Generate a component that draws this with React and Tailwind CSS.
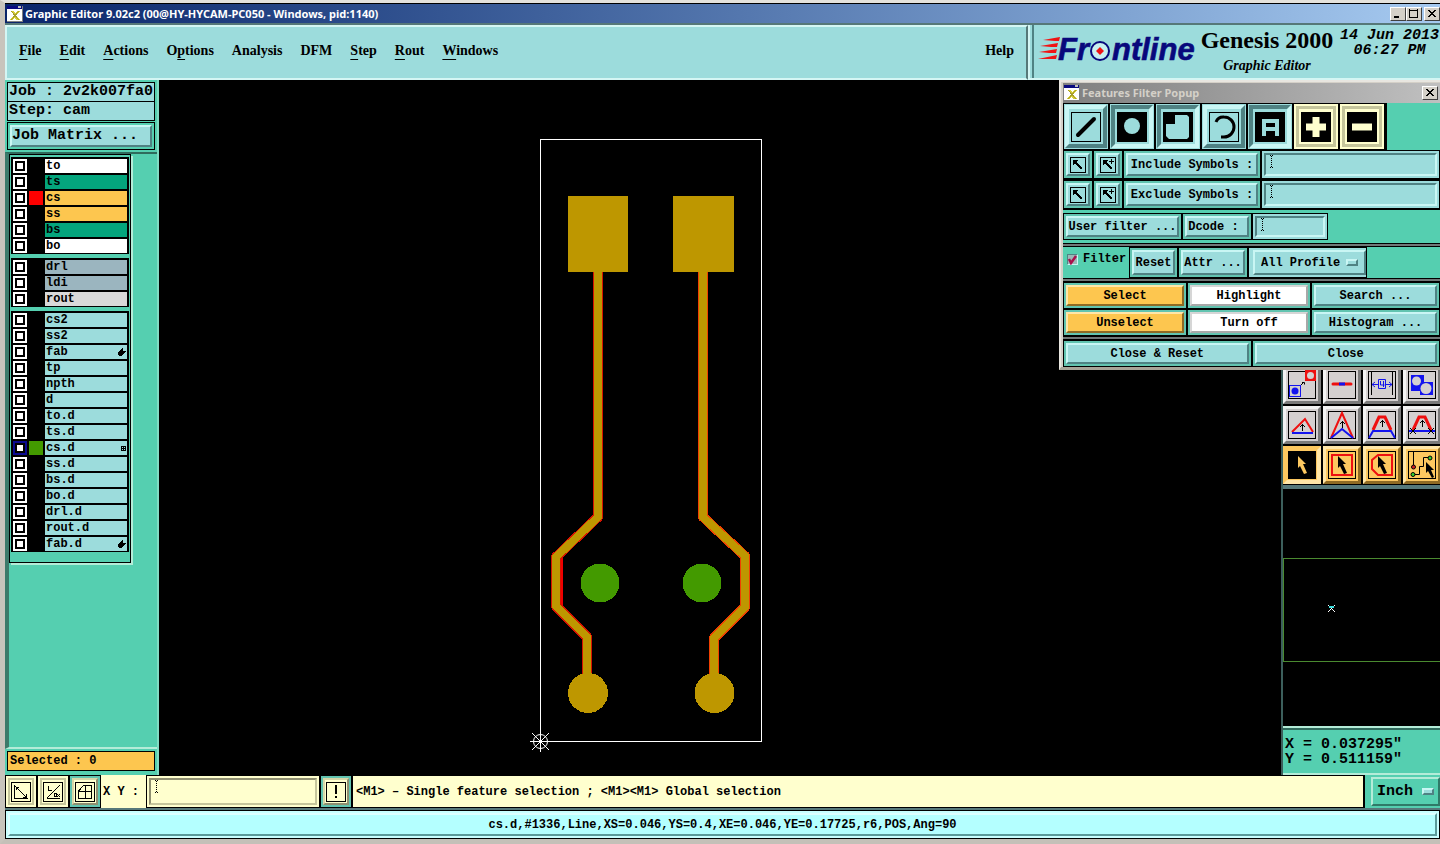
import React, { useState } from 'react';

const MONO = "font-['Liberation_Mono','DejaVu_Sans_Mono',monospace]";
const SERIF = "font-['Liberation_Serif',serif]";
const SANS = "font-['Noto_Sans','Open_Sans',sans-serif]";

// Motif style edges
const RAISED = 'border-2 border-t-[#c9f6f4] border-l-[#c9f6f4] border-b-[#4f8283] border-r-[#4f8283]';
const SUNKEN = 'border-2 border-t-[#4f8283] border-l-[#4f8283] border-b-[#c9f6f4] border-r-[#c9f6f4]';
const RAISED_GOLD = 'border-2 border-t-[#ffe6a8] border-l-[#ffe6a8] border-b-[#8f6a24] border-r-[#8f6a24]';
const RAISED_WHITE = 'border-2 border-t-[#d6d6d6] border-l-[#d6d6d6] border-b-[#a8a8a8] border-r-[#a8a8a8]';

const menus = [
  ['', 'F', 'ile'],
  ['', 'E', 'dit'],
  ['', 'A', 'ctions'],
  ['O', 'p', 'tions'],
  ['Analysis', '', ''],
  ['DFM', '', ''],
  ['', 'S', 'tep'],
  ['', 'R', 'out'],
  ['', 'W', 'indows'],
];

const layerGroups = [
  [
    { name: 'to', bg: 'bg-white' },
    { name: 'ts', bg: 'bg-[#04a57d]' },
    { name: 'cs', bg: 'bg-[#fdc64f]', swatch: 'bg-[#fe0000]' },
    { name: 'ss', bg: 'bg-[#fdc64f]' },
    { name: 'bs', bg: 'bg-[#04a57d]' },
    { name: 'bo', bg: 'bg-white' },
  ],
  [
    { name: 'drl', bg: 'bg-[#9bb5bf]' },
    { name: 'ldi', bg: 'bg-[#9bb5bf]' },
    { name: 'rout', bg: 'bg-[#d9d9d9]' },
  ],
  [
    { name: 'cs2' },
    { name: 'ss2' },
    { name: 'fab', mark: 'hand' },
    { name: 'tp' },
    { name: 'npth' },
    { name: 'd' },
    { name: 'to.d' },
    { name: 'ts.d' },
    { name: 'cs.d', swatch: 'bg-[#439a00]', mark: 'grid' },
    { name: 'ss.d' },
    { name: 'bs.d' },
    { name: 'bo.d' },
    { name: 'drl.d' },
    { name: 'rout.d' },
    { name: 'fab.d', mark: 'hand' },
  ],
];

const AppIcon = () => (
  <svg width="16" height="16" viewBox="0 0 16 16" shapeRendering="crispEdges" className="shrink-0">
    <rect width="16" height="16" fill="#808080" />
    <rect width="15" height="15" fill="#fff" />
    <rect width="15" height="3" fill="#0a0a80" />
    <rect x="11" y="0" width="3" height="2" fill="#c0c0c0" />
    <path d="M3 5h4l1 2 2-2h3l-4 4 4 5H9l-1-3-2 3H3l4-5z" fill="#d8cf3a" />
    <path d="M4 5l8 9M12 5l-8 9" stroke="#a89f28" strokeWidth="1" />
  </svg>
);

const IBeam = () => (
  <svg width="5" height="13" viewBox="0 0 5 13" shapeRendering="crispEdges" className="shrink-0">
    <path d="M2.500 1v12" stroke="#000" strokeDasharray="1 1" />
    <path d="M1 .5h1M3 .5h1M1 12.500h1M3 12.500h1" stroke="#000" />
  </svg>
);

const Dash = () => (
  <span className={`pointer-events-none h-[7px] w-3 shrink-0 bg-[#9cdcdc] ${RAISED}`} />
);

const WinButton = ({ label, children }) => (
  <button
    aria-label={label}
    className="flex h-[14px] w-4 shrink-0 items-center justify-center border border-t-white border-l-white border-b-[#404040] border-r-[#404040] bg-[#d4d0c8]"
  >
    <svg width="10" height="10" viewBox="0 0 10 10" fill="none" stroke="#000" shapeRendering="crispEdges">
      {children}
    </svg>
  </button>
);

const closeGlyph = <path d="M1 1l7 7M2 1l7 7M8 1l-7 7M9 1l-7 7" shapeRendering="auto" />;

function TitleBar() {
  return (
    <header className={`flex h-[19px] items-center gap-0.5 bg-gradient-to-r from-[#0a246a] to-[#a6caf0] pl-0.5 ${SANS}`}>
      <AppIcon />
      <h1 className="flex-1 text-[11px] leading-[18px] font-bold text-white">
        Graphic Editor 9.02c2 (00@HY-HYCAM-PC050 - Windows, pid:1140)
      </h1>
      <div className="flex">
        <WinButton label="Minimize"><path d="M1 8h5" strokeWidth="2" /></WinButton>
        <WinButton label="Maximize"><path d="M.5 1h8M.5 0v8.500M8.500 0v8.500M0 8.500h9" /></WinButton>
      </div>
      <WinButton label="Close">{closeGlyph}</WinButton>
    </header>
  );
}

const Logo = () => (
  <svg width="162" height="40" viewBox="1035 32 162 40" className="shrink-0" role="img" aria-label="Frontline">
    <g fill="#f01414">
      <path d="M1042 42l17-3-1 4-4 0z" />
      <path d="M1039 48l18-3-1 4-6 0z" />
      <path d="M1038 54l18-3-1 4-7 0z" />
      <path d="M1037 61l19-4-1 4-7 0z" />
    </g>
    <g fill="#08087c" stroke="#08087c" strokeWidth=".6" fontFamily="Liberation Sans" fontWeight="700" fontStyle="italic" fontSize="31">
      <text x="1057" y="62">Fr</text>
      <text x="1111" y="62">ntline</text>
    </g>
    <circle cx="1099" cy="53" r="9" fill="#c8f0f0" stroke="#08087c" strokeWidth="2" />
    <path d="M1099 49l4 4-4 4-4-4z" fill="#f01414" />
  </svg>
);

function MenuRow() {
  return (
    <div className={`flex h-[57px] bg-[#567878] pt-0.5 ${SERIF}`}>
      <nav className="flex flex-1 items-center gap-[18px] border-2 border-t-[#d4f6f4] border-l-[#d4f6f4] border-b-[#d4f6f4] border-r-[#567878] bg-[#9cdcdc] pr-3 pb-1 pl-3 text-[14px] leading-4 font-bold">
        {menus.map(([pre, key, post]) => (
          <button key={pre + key + post} className="whitespace-nowrap">
            {pre}
            <span className="underline underline-offset-4">{key}</span>
            {post}
          </button>
        ))}
        <button className="ml-auto">Help</button>
      </nav>
      <div className="flex w-[412px] shrink-0 items-start overflow-hidden border-b-2 border-l-2 border-[#d4f6f4] bg-[#9cdcdc]">
        <div className="ml-0.5 flex h-full items-start border-l-2 border-[#4f8283] pt-[5px] pl-0.5">
          <Logo />
        </div>
        <div className="w-[138px] shrink-0 pt-px text-center">
          <div className="text-[24px] leading-[28px] font-bold whitespace-nowrap">Genesis 2000</div>
          <div className="text-[14px] leading-6 font-bold italic">Graphic Editor</div>
        </div>
        <div className={`ml-1 w-[99px] shrink-0 pt-[3px] text-center text-[15px] leading-[15px] font-bold whitespace-nowrap italic ${MONO}`}>
          14 Jun 2013
          <br />
          06:27 PM
        </div>
      </div>
    </div>
  );
}

const LayerMark = ({ type }) => {
  if (type === 'hand') {
    return (
      <svg width="8" height="8" viewBox="0 0 8 8" shapeRendering="crispEdges">
        <path d="M3 1h1V0h1v3h3v1H7v1H6v1H5v1H4v1H1V7H0V4h1V3h1V2h1z" />
      </svg>
    );
  }
  return (
    <svg width="5" height="5" viewBox="0 0 5 5" shapeRendering="crispEdges">
      <path d="M0 0h5v5H0zM1 1v1h1V1zM3 1v1h1V1zM1 3v1h1V3zM3 3v1h1V3z" fillRule="evenodd" />
    </svg>
  );
};

function LayerList({ checked, onToggle }) {
  return (
    <div className="flex w-[122px] flex-col gap-1 border border-black bg-[#55cfb0] px-px pt-0.5 pb-2.5 shadow-[2px_2px_0_#b4ecd8]">
      {layerGroups.map((group, i) => (
        <div key={i} className="bg-black px-0.5 pt-px">
          {group.map((layer) => (
            <label key={layer.name} className="flex h-4 gap-0.5 pb-0.5 pt-px">
              <input
                type="checkbox"
                checked={checked.includes(layer.name)}
                onChange={() => onToggle(layer.name)}
                className="h-3.5 w-3.5 appearance-none border-2 border-white bg-white shadow-[inset_0_0_0_2px_#000] checked:border-[#0a0a90]"
              />
              <span className={`h-3.5 w-3.5 ${layer.swatch || 'bg-black'}`} />
              <span className={`flex h-3.5 flex-1 items-center justify-between px-px text-[12px] leading-[14px] font-bold ${layer.bg || 'bg-[#9cdcdc]'}`}>
                {layer.name}
                {layer.mark && <LayerMark type={layer.mark} />}
              </span>
            </label>
          ))}
        </div>
      ))}
    </div>
  );
}

function LeftPanel() {
  const [checked, setChecked] = useState(['cs.d']);

  const toggle = (name) => {
    setChecked(checked.includes(name) ? checked.filter((n) => n !== name) : [...checked, name]);
  };

  return (
    <aside className={`flex w-[154px] shrink-0 flex-col border-r-2 border-[#7fdcc4] bg-[#55cfb0] ${MONO}`}>
      <div className="flex flex-col px-0.5 pt-0.5 text-[15px] leading-[18px] font-bold whitespace-nowrap">
        <div className="border border-black bg-[#9cdcdc] px-px">Job : 2v2k007fa0</div>
        <div className="-mt-px border border-black bg-[#9cdcdc] px-px">Step: cam</div>
        <div className="mt-px border border-black p-0.5">
          <button className={`w-full bg-[#9cdcdc] text-left leading-[18px] ${RAISED}`}>Job Matrix ...</button>
        </div>
      </div>
      <div className="mt-0.5 flex flex-1 flex-col border-t-2 border-b-2 border-l-4 border-t-[#2f6b5c] border-b-[#b4ecd8] border-l-[#3c7a6a]">
        <LayerList checked={checked} onToggle={toggle} />
      </div>
      <div className="px-0.5 pt-0.5 pb-1">
        <div className="border border-black bg-[#fdc64f] px-0.5 text-[12px] leading-[18px] font-bold">Selected : 0</div>
      </div>
    </aside>
  );
}

const leftTrack = 'M598 271V517L556 557V606L587 637V680';
const rightTrack = 'M703 271V517L745 556V607L714 638V680';

const Board = () => (
  <svg viewBox="159 80 1122 695" className="h-full w-full" fill="none" shapeRendering="crispEdges">
    <rect x="540.500" y="139.500" width="221" height="602" stroke="#fff" />
    <path d="M561 556V608M742 556V608" stroke="#f00000" strokeWidth="4" />
    <path d={leftTrack} stroke="#d81400" strokeWidth="10" strokeLinejoin="round" />
    <path d={rightTrack} stroke="#f04000" strokeWidth="10" strokeLinejoin="round" />
    <path d="M552.500 558v48" stroke="#439a00" />
    <path d={leftTrack} stroke="#be9700" strokeWidth="8" strokeLinejoin="round" />
    <path d={rightTrack} stroke="#be9700" strokeWidth="8" strokeLinejoin="round" />
    <g fill="#be9700">
      <rect x="568" y="196" width="60" height="76" />
      <rect x="673" y="196" width="61" height="76" />
      <circle cx="588" cy="693" r="20" />
      <circle cx="714.500" cy="693" r="20" />
    </g>
    <g fill="#439a00">
      <circle cx="600" cy="583" r="19.500" />
      <circle cx="702" cy="583" r="19.500" />
    </g>
    <g stroke="#fff" shapeRendering="auto">
      <circle cx="540.500" cy="741.500" r="7" />
      <path d="M530 741.500h21M540.500 731v21M532 733l17 17M549 733l-17 17" />
    </g>
  </svg>
);

const red = { stroke: '#ee1010', strokeWidth: 2 };
const blue = { stroke: '#1414ee', strokeWidth: 2 };
const Up = ({ y = 10 }) => <path d={`M14.500 ${y}v7M12 ${y + 3}l2.500-2.500 2.500 2.500`} stroke="#000" />;
const arrowShape = 'M10 5l8 8h-3l4 9-3 1-4-8-2 2z';

const tools = [
  { label: 'Move', icon: <><rect x="17" y="-1" width="11" height="11" fill="#ee1010" /><circle cx="22.500" cy="4.500" r="3.500" fill="#d4d0d0" /><rect x="1.500" y="14.500" width="11" height="11" stroke="#1414ee" /><circle cx="7" cy="20" r="3.500" fill="#1414ee" /><path d="M13 14l3-3M14 11.500h2.500v2" stroke="#000" /></> },
  { label: 'Line', icon: <><path d="M5 13h18" stroke="#ee1010" strokeWidth="3" strokeLinecap="round" /><path d="M11 13h6" stroke="#1414ee" strokeWidth="3" /></> },
  { label: 'Space', icon: <><path d="M3.500 1v23M24.500 1v23" stroke="#000" /><path d="M4 13.500h6M18 13.500h6M7 11l-3 2.500 3 2.500M21 11l3 2.500-3 2.500M10.500 8.500h7v9h-7zM12.500 10v4h4M15.500 10v6" stroke="#1414ee" /></> },
  { label: 'Copy shape', icon: <><path d="M3 4h13v7h9v13H12v-4H3z" fill="#1414ee" /><circle cx="8.500" cy="10" r="4.500" fill="#d4d0d0" /><circle cx="18" cy="17.500" r="5.500" fill="#d4d0d0" /></> },
  { label: 'Angle 1', icon: <><path d="M4 21L17 8l8 13" {...red} /><path d="M4 22h21" {...blue} /><Up y={13} /></> },
  { label: 'Angle 2', icon: <><path d="M3 27L14 2l11 25" {...red} /><path d="M3 27l11-9 11 9" {...blue} /><Up y={10} /></> },
  { label: 'Angle 3', icon: <><path d="M5 19L11 6h6l6 13" {...red} strokeWidth={3} /><path d="M1 27l4-7h18l4 7" {...blue} /><Up y={9} /></> },
  { label: 'Angle 4', icon: <><path d="M5 19L11 6h6l6 13" {...red} strokeWidth={3} /><path d="M1 20h26" {...blue} /><path d="M2 17l6 6M8 17l-6 6M20 17l6 6M26 17l-6 6" stroke="#000" /><Up y={9} /></> },
  { label: 'Select feature', gold: true, active: true, icon: <><rect width="28" height="28" fill="#000" /><path d={arrowShape} fill="#fdc860" /></> },
  { label: 'Select in rectangle', gold: true, icon: <><rect x="4" y="4" width="20" height="20" {...red} /><path d={arrowShape} fill="#000" /></> },
  { label: 'Select in polygon', gold: true, icon: <><path d="M10 4h14v20H10l-6-6V9z" {...red} /><path d={arrowShape} fill="#000" /></> },
  { label: 'Select net', gold: true, icon: <><path d="M5.500 1v15M5 23.500h6.500v-8h4v-9h7" stroke="#000" /><circle cx="5.500" cy="16" r="2" fill="#d02020" stroke="#000" /><circle cx="5" cy="23.500" r="2" fill="#30d030" stroke="#000" /><circle cx="22" cy="7" r="2" fill="#30d030" stroke="#000" /><path d="M18 11l8 8h-3l3 7-2 1-4-7-2 2z" fill="#000" /></> },
];

const toolStyle = (tool) => {
  if (tool.active) return 'bg-[#fdc860] border-4 border-t-[#fdc860] border-l-[#fdc860] border-b-[#ffe6a8] border-r-[#ffe6a8]';
  if (tool.gold) return 'bg-[#fdc860] border-3 border-t-[#ffe6a8] border-l-[#ffe6a8] border-b-[#8f6a24] border-r-[#8f6a24]';
  return 'bg-[#d4d0d0] border-3 border-t-[#f2f2f2] border-l-[#f2f2f2] border-b-[#7a7a7a] border-r-[#7a7a7a]';
};

function RightPanel() {
  return (
    <aside className="flex w-[159px] shrink-0 flex-col justify-end overflow-hidden border-l-2 border-[#3c5f5c] bg-black">
      <div className="grid w-[158px] grid-cols-[repeat(4,38px)] gap-0.5">
        {tools.map((tool) => (
          <button key={tool.label} aria-label={tool.label} className={`flex h-[38px] w-[38px] items-center justify-center ${toolStyle(tool)}`}>
            <svg width="28" height="28" viewBox="0 0 28 28" fill="none" className="shrink-0 overflow-visible">
              <rect x=".5" y=".5" width="27" height="27" stroke="#000" />
              {tool.icon}
            </svg>
          </button>
        ))}
      </div>
      <div className="mt-px h-[243px] border-t-4 border-b-2 border-t-[#56787a] border-b-[#b4ecd8] bg-black">
        <svg width="158" height="237" viewBox="1283 489 158 237" fill="none" shapeRendering="crispEdges">
          <path d="M1441 558.500H1283.500V661.500H1441" stroke="#4a8a30" />
          <path d="M1328 605l7 7M1335 605l-7 7" stroke="#fff" shapeRendering="auto" />
          <path d="M1329 606.500h5" stroke="#40e0e0" strokeWidth="2" />
        </svg>
      </div>
      <div className={`border-t-2 border-b-2 border-t-[#2f6b5c] border-b-[#b4ecd8] bg-[#55cfb0] pt-[7px] pb-1.5 pl-0.5 text-[15px] leading-[15px] font-bold whitespace-nowrap ${MONO}`}>
        <div>X = 0.037295"</div>
        <div>Y = 0.511159"</div>
      </div>
    </aside>
  );
}

const filterIcons = [
  { label: 'Lines', icon: <><rect x=".5" y=".5" width="29" height="29" stroke="#000" /><path d="M7 23L23 7" stroke="#000" strokeWidth="4" strokeLinecap="round" /></> },
  { label: 'Pads', on: true, icon: <><rect width="30" height="30" fill="#000" /><circle cx="15" cy="14" r="8" fill="#9cdcdc" /></> },
  { label: 'Surfaces', on: true, icon: <><rect width="30" height="30" fill="#000" /><path d="M12 3h12l2 2v20l-2 2H6l-3-3V12h9z" fill="#9cdcdc" /></> },
  { label: 'Arcs', icon: <><rect x=".5" y=".5" width="29" height="29" stroke="#000" /><path d="M7 10a8 8 0 0 1 8-5a10 10 0 0 1 0 20h-3" stroke="#000" strokeWidth="3" /></> },
  { label: 'Text', on: true, icon: <><rect width="30" height="30" fill="#000" /><path d="M9 24V9h13v15M9 17h13" stroke="#9cdcdc" strokeWidth="4" /></> },
  { label: 'Positive', cream: true, icon: <><rect width="30" height="30" fill="#000" /><path d="M15 5v20M5 15h20" stroke="#ffffce" strokeWidth="7" /></> },
  { label: 'Negative', cream: true, icon: <><rect width="30" height="30" fill="#000" /><path d="M5 15h20" stroke="#ffffce" strokeWidth="7" /></> },
];

const filterIconStyle = (item) => {
  if (item.cream) return 'bg-[#ffffce] border-3 border-[#c6c69c]';
  if (item.on) return 'bg-[#9cdcdc] border-4 border-t-[#4f8283] border-l-[#4f8283] border-b-[#c9f6f4] border-r-[#c9f6f4]';
  return 'bg-[#9cdcdc] border-4 border-t-[#c9f6f4] border-l-[#c9f6f4] border-b-[#4f8283] border-r-[#4f8283]';
};

// Black frame + green margin + raised face
const PopButton = ({ className = '', face = 'bg-[#9cdcdc]', edge = RAISED, children }) => (
  <button className={`border border-black bg-[#62c4b0] p-0.5 ${className}`}>
    <span className={`flex h-full items-center justify-center px-[3px] whitespace-pre ${face} ${edge}`}>{children}</span>
  </button>
);

const PopField = ({ label, className = '' }) => (
  <div className={`flex border border-black bg-[#9cdcdc] p-0.5 ${className}`}>
    <div className={`flex min-w-0 flex-1 items-start pl-[3px] ${SUNKEN}`}>
      <IBeam />
      <input aria-label={label} className="h-full w-full min-w-0 bg-transparent outline-none" />
    </div>
  </div>
);

const PickIcon = ({ plus }) => (
  <svg width="16" height="16" viewBox="0 0 16 16" fill="none" stroke="#000" shapeRendering="crispEdges" className="shrink-0">
    <rect x=".5" y=".5" width="15" height="15" />
    <path d="M4 4l8 8" strokeWidth="2" />
    <path d="M3 3h5L3 8z" fill="#000" stroke="none" />
    {plus && <path d="M11.500 2v5M9 4.500h5" />}
  </svg>
);

const Rule = () => <div className="h-1 border-y border-black bg-[#707878]" />;

function FilterPopup() {
  const [filterOn, setFilterOn] = useState(true);

  return (
    <section className="absolute top-0 right-0 w-[381px] border-2 border-r-0 border-b-3 border-t-[#e8e6e0] border-l-[#e8e6e0] border-b-[#a8a498] bg-[#d4d0c8] pt-px pl-0.5">
      <div className={`flex h-5 items-center bg-gradient-to-r from-[#808080] to-[#c0c0c0] pr-0.5 pl-px ${SANS}`}>
        <AppIcon />
        <h2 className="flex-1 pl-0.5 text-[11px] leading-[18px] font-bold text-[#d4d0c8]">Features Filter Popup</h2>
        <WinButton label="Close popup">{closeGlyph}</WinButton>
      </div>
      <div className={`bg-[#55cfb0] text-[12px] leading-4 font-bold ${MONO}`}>
        <div className="flex w-[324px] gap-0.5 bg-black p-px">
          {filterIcons.map((item) => (
            <button
              key={item.label}
              aria-label={item.label}
              className={`flex h-[45px] w-11 items-center justify-center ${item.cream ? 'bg-[#ffffce] p-0.5' : 'bg-[#9cdcdc] p-px'}`}
            >
              <span className={`flex h-full w-full items-center justify-center ${filterIconStyle(item)}`}>
                <svg width="30" height="30" viewBox="0 0 30 30" fill="none" className="shrink-0">
                  {item.icon}
                </svg>
              </span>
            </button>
          ))}
        </div>
        {['Include Symbols :', 'Exclude Symbols :'].map((text) => (
          <div key={text} className="flex h-[30px] border-b border-black">
            <PopButton className="w-[30px]"><PickIcon /></PopButton>
            <PopButton className="w-[30px]"><PickIcon plus /></PopButton>
            <PopButton className="w-[138px]">{text}</PopButton>
            <PopField label={text} className="flex-1" />
          </div>
        ))}
        <div className="mt-[3px] flex h-[27px]">
          <PopButton className="w-[119px]">User filter ...</PopButton>
          <PopButton className="w-[70px]">{'Dcode : '}</PopButton>
          <PopField label="Dcode" className="w-[76px]" />
        </div>
        <div className="h-[3px]" />
        <Rule />
        <div className="flex h-[31px]">
          <label className="flex h-6 w-[66px] items-center gap-[5px] pl-1">
            <span className="relative flex">
              <input
                type="checkbox"
                checked={filterOn}
                onChange={() => setFilterOn(!filterOn)}
                className="h-[11px] w-[11px] appearance-none border border-t-[#4f8283] border-l-[#4f8283] border-b-[#c9f6f4] border-r-[#c9f6f4] bg-[#9cb8b8]"
              />
              {filterOn && (
                <svg width="11" height="11" viewBox="0 0 11 11" fill="none" className="pointer-events-none absolute inset-0">
                  <path d="M2 5l2 4 5-7" stroke="#a8104c" strokeWidth="2.500" />
                </svg>
              )}
            </span>
            Filter
          </label>
          <PopButton className="w-[49px]">Reset</PopButton>
          <PopButton className="w-[70px]">Attr ...</PopButton>
          <div className="w-[119px] border border-black bg-[#9cdcdc] py-0.5 pl-1">
            <div className={`flex h-full items-center pr-1.5 pl-1.5 ${RAISED}`}>
              <select aria-label="Profile" className="min-w-0 flex-1 appearance-none outline-none">
                <option>All Profile</option>
                <option>In Profile</option>
                <option>Out Profile</option>
              </select>
              <Dash />
            </div>
          </div>
        </div>
        <Rule />
        <div className="grid grid-cols-[124px_124px_1fr] grid-rows-[27px_27px]">
          <PopButton face="bg-[#fdc64f]" edge={RAISED_GOLD}>Select</PopButton>
          <PopButton face="bg-white" edge={RAISED_WHITE}>Highlight</PopButton>
          <PopButton>Search ...</PopButton>
          <PopButton face="bg-[#fdc64f]" edge={RAISED_GOLD}>Unselect</PopButton>
          <PopButton face="bg-white" edge={RAISED_WHITE}>Turn off</PopButton>
          <PopButton>Histogram ...</PopButton>
        </div>
        <Rule />
        <div className="grid h-[27px] grid-cols-2">
          <PopButton>Close &amp; Reset</PopButton>
          <PopButton>Close</PopButton>
        </div>
      </div>
    </section>
  );
}

const CREAM_EDGE = 'border-2 border-[#c6c69c]';

const BarButton = ({ label, green, children }) => (
  <button
    aria-label={label}
    className={`flex w-8 shrink-0 items-center justify-center border border-black ${green ? 'bg-[#62c4b0]' : 'bg-[#ffffce]'}`}
  >
    <span className={`flex h-[27px] w-[26px] items-center justify-center bg-[#ffffce] ${green ? 'border-2 border-t-[#d8d8a8] border-l-[#d8d8a8] border-b-[#8f8f70] border-r-[#8f8f70]' : CREAM_EDGE}`}>
      <svg width="20" height="20" viewBox="0 0 20 20" fill="none" stroke="#000" shapeRendering="crispEdges" className="shrink-0">
        <rect x=".5" y=".5" width="19" height="19" />
        {children}
      </svg>
    </span>
  </button>
);

function CommandBar() {
  return (
    <div className={`flex h-[33px] bg-[#ffffce] text-[12px] leading-4 font-bold ${MONO}`}>
      <BarButton label="Coordinates">
        <path d="M3.500 3v13.500H17M4 4l12 12M5 8V5h3M12 15h3v-3" />
      </BarButton>
      <BarButton label="Angle">
        <path d="M4 16L17 3M4 16.500h13M5.500 4v4h3M11 11.500h2v3h-2zM14 12l3 3M17 12l-3 3" />
      </BarButton>
      <BarButton label="Grid" green>
        <path d="M3.500 9l5-5.500h8v12.500h-13zM10.500 3.500V16M3.500 9.500h13" />
      </BarButton>
      <label htmlFor="xy" className="flex w-[45px] shrink-0 items-center pl-0.5 whitespace-pre">X Y :</label>
      <div className="flex w-[174px] shrink-0 border border-black p-0.5">
        <div className="flex min-w-0 flex-1 items-start border-2 border-t-[#8f8f70] border-l-[#8f8f70] border-b-[#c6c69c] border-r-[#c6c69c] pl-[3px]">
          <IBeam />
          <input id="xy" className="h-full w-full min-w-0 bg-transparent outline-none" />
        </div>
      </div>
      <BarButton label="Alert" green>
        <path d="M10 3v9M10 14v2" strokeWidth="2" />
      </BarButton>
      <p className="flex flex-1 items-center border-y border-l border-y-black border-l-black pl-[3px] whitespace-nowrap">
        &lt;M1&gt; – Single feature selection ; &lt;M1&gt;&lt;M1&gt; Global selection
      </p>
      <div className="w-[77px] shrink-0 border-l-2 border-black bg-[#55cfb0] py-0.5 pl-1.5 text-[15px]">
        <div className="flex h-full items-center border-2 border-t-[#b4ecd8] border-l-[#b4ecd8] border-b-[#2f7a68] border-r-[#2f7a68] pr-1 pl-1">
          <select aria-label="Units" className="min-w-0 flex-1 appearance-none outline-none">
            <option>Inch</option>
            <option>mm</option>
          </select>
          <Dash />
        </div>
      </div>
    </div>
  );
}

export default function App() {
  return (
    <div className="flex min-h-screen flex-col overflow-hidden border-t-[3px] border-b-[5px] border-l-[5px] border-t-[#e4e2dc] border-b-[#c4c0b8] border-l-[#c8c4bc] bg-black pt-px text-black">
      <TitleBar />
      <MenuRow />
      <main className="relative flex flex-1">
        <LeftPanel />
        <div className="min-w-0 flex-1 bg-black">
          <Board />
        </div>
        <RightPanel />
        <FilterPopup />
      </main>
      <CommandBar />
      <footer className={`h-[31px] border-t-2 border-[#56787a] text-center text-[12px] font-bold ${MONO}`}>
        <div className="h-full border border-black bg-[#c8ffff] p-0.5">
          <div className="h-full border-2 border-t-[#dcffff] border-l-[#dcffff] border-b-[#5a9a9a] border-r-[#5a9a9a] bg-[#b4ffff] leading-5">
            cs.d,#1336,Line,XS=0.046,YS=0.4,XE=0.046,YE=0.17725,r6,POS,Ang=90
          </div>
        </div>
      </footer>
    </div>
  );
}
